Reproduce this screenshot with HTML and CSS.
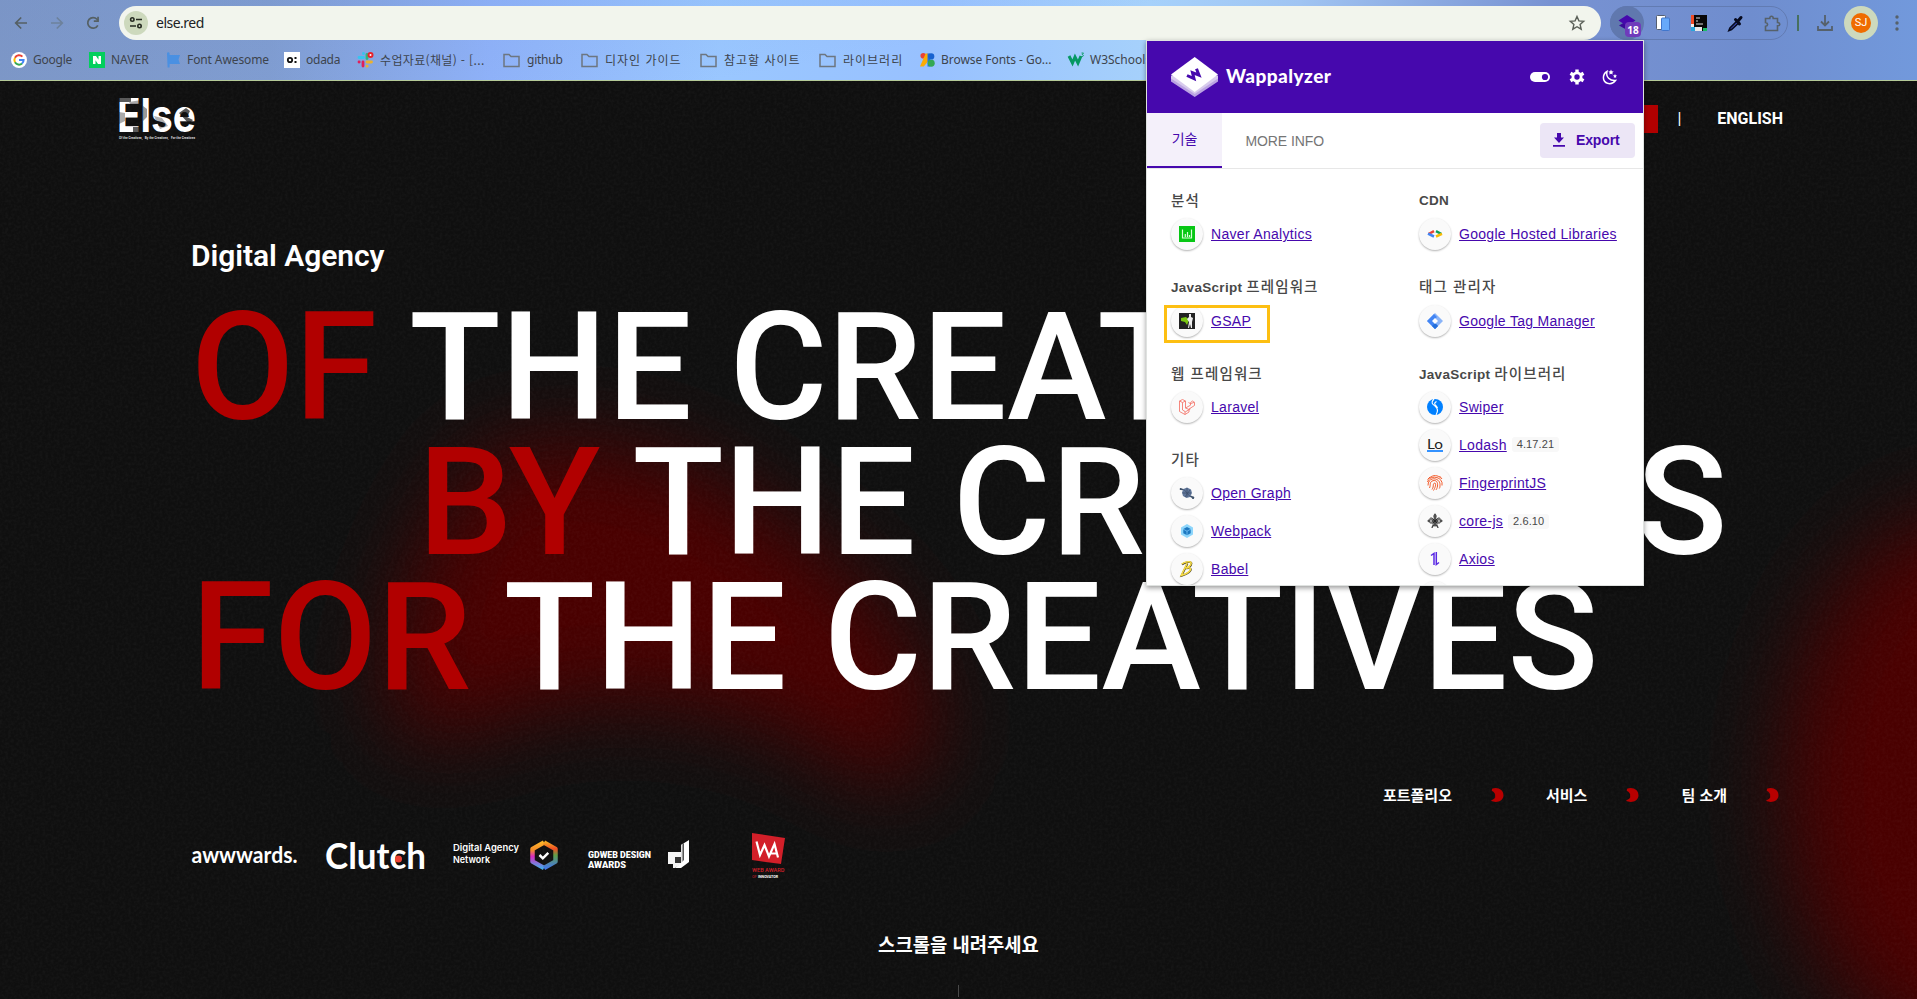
FILE: index.html
```
<!DOCTYPE html>
<html lang="ko">
<head>
<meta charset="utf-8">
<title>else.red</title>
<link rel="stylesheet" href="styles.css">
</head>
<body>
<header class="chrome">
  <div class="toolbar">
    <div class="nav-buttons">
      <svg width="14" height="14" viewBox="0 0 14 14"><path d="M13 7H2M7.200 1.500 1.700 7l5.500 5.500" fill="none" stroke="#556064" stroke-width="1.700"/></svg>
      <svg width="14" height="14" viewBox="0 0 14 14"><path d="M1 7h11M6.800 1.500 12.300 7l-5.500 5.500" fill="none" stroke="#6d829c" stroke-width="1.700"/></svg>
      <svg width="14" height="14" viewBox="0 0 14 14"><path d="M11.800 9.300A5.300 5.300 0 1 1 11 3.300L12.200 4.600" fill="none" stroke="#556064" stroke-width="1.700"/><path d="M12.900.8v5.100H7.800V4.200h3.400V.8z" fill="#556064"/></svg>
    </div>
    <div class="address">
      <span class="site-info"><svg width="14" height="12" viewBox="0 0 14 12" fill="none" stroke="#262b22" stroke-width="1.600"><circle cx="3.300" cy="2.500" r="1.700"/><path d="M7 2.500h6M1 9h6"/><circle cx="10.500" cy="9" r="1.700"/></svg></span>
      <span class="url">else.red</span>
      <svg class="star" width="16" height="16" viewBox="0 0 16 16"><path d="M8 1.500l1.900 4.400 4.800.4-3.600 3.200 1.100 4.700L8 11.700l-4.200 2.500 1.100-4.700L1.300 6.300l4.800-.4z" fill="none" stroke="#5b6058" stroke-width="1.400"/></svg>
    </div>
    <div class="extensions">
      <span class="ext-active">
        <svg width="18" height="17" viewBox="0 0 18 17"><path d="M9 6 17 10.500 9 15 1 10.500z" fill="#3a0a98"/><path d="M9 0 17.500 5.500 9 11 .5 5.500z" fill="#4608ad"/></svg>
        <b class="badge">18</b>
      </span>
      <svg width="16" height="18" viewBox="0 0 16 18"><rect x="1.500" y="1.500" width="9" height="14" rx="1" fill="#fff" stroke="#555e70"/><rect x="6.500" y="4" width="8" height="12.500" rx="1" fill="#67a9fa" stroke="#4176cc"/></svg>
      <svg width="16" height="16" viewBox="0 0 16 16"><path d="M0 0h16v16H0z" fill="#080808"/><path d="M0 0h3v9H0z" fill="#ef4b25"/><path d="M0 9h3v3H0z" fill="#eee"/><path d="M0 12h4v4H0z" fill="#2aa5dc"/><path d="M4 12h7v4H4z" fill="#e8e8e8"/><path d="M12 13h4v3h-4z" fill="#18bd65"/><path d="M5 3h4M5 6h2M5 9h7" stroke="#ddd"/></svg>
      <svg width="17" height="17" viewBox="0 0 17 17"><path d="M10 6 3 13 2 15.500 4.500 14.500 12 7.500z" fill="#4457d5" stroke="#070a1e" stroke-width="1.700"/><path d="M8.500 4.500l4 4.500M11 6l3-3.500" stroke="#070a1e" stroke-width="3" stroke-linecap="round"/></svg>
      <svg width="17" height="17" viewBox="0 0 17 17"><path d="M1.500 3.500h4.300c0-3 3.400-3 3.400 0h4.300v4c3 0 3 3.300 0 3.300V15.500h-12v-4.200c2.800-.5 2.800-3.300 0-3.800z" fill="none" stroke="#56616a" stroke-width="1.600"/></svg>
    </div>
    <i class="divider"></i>
    <svg class="download" width="16" height="16" viewBox="0 0 16 16"><path d="M8 0v10M4 6.500l4 4 4-4M1 11v4h14v-4" fill="none" stroke="#56616a" stroke-width="1.800"/></svg>
    <span class="avatar"><span>SJ</span></span>
    <svg class="kebab" width="4" height="16" viewBox="0 0 4 16" fill="#56616a"><circle cx="2" cy="2" r="1.700"/><circle cx="2" cy="8" r="1.700"/><circle cx="2" cy="14" r="1.700"/></svg>
  </div>
  <nav class="bookmarks">
    <a class="bm"><svg width="16" height="16" viewBox="0 0 16 16"><circle cx="8" cy="8" r="8" fill="#fff"/><g fill="none" stroke-width="2"><path d="M11.400 4.600A4.600 4.600 0 0 0 4 5.700" stroke="#ea4335"/><path d="M4 5.700a4.600 4.600 0 0 0 0 4.600" stroke="#fbbc05"/><path d="M4 10.300a4.600 4.600 0 0 0 7 1.200" stroke="#34a853"/><path d="M11 11.500A4.600 4.600 0 0 0 12.600 8H8" stroke="#4285f4"/></g></svg><span class="narrow">Google</span></a>
    <a class="bm"><svg width="16" height="16" viewBox="0 0 16 16"><path d="M0 0h16v16H0z" fill="#03cf5d"/><path d="M4 4h3l2.500 3.700V4H12v8H9L6.500 8.300V12H4z" fill="#fff"/></svg><span>NAVER</span></a>
    <a class="bm tight"><svg width="16" height="16" viewBox="0 0 16 16"><path d="M0 1.500a1.300 1.300 0 0 1 2.600 0V3H13L11.500 7.500 13 12H2.600v3.500H.6z" fill="#4a90e2"/></svg><span>Font Awesome</span></a>
    <a class="bm"><svg width="16" height="16" viewBox="0 0 16 16"><path d="M0 0h16v16H0z" fill="#fff"/><circle cx="6" cy="8" r="2.200" fill="none" stroke="#111" stroke-width="1.800"/><path d="M10.500 5h2v2h-2zM10.500 9h2v2h-2z" fill="#111"/></svg><span class="narrow">odada</span></a>
    <a class="bm"><svg width="17" height="16" viewBox="0 0 17 16" stroke-width="2.800" stroke-linecap="round"><path d="M6.500 1.500v.2M2 5.500h4.500" stroke="#36c5f0"/><path d="M10 2.500v4" stroke="#2eb67d"/><path d="M10 10h4.500M10 14.200h.2" stroke="#ecb22e"/><path d="M2 10h.2M6 10v4" stroke="#e01e5a"/><circle cx="13.500" cy="3" r="2" fill="#fff" stroke="#e8232d" stroke-width="2"/></svg><span class="ko slack">수업자료(채널) - [...</span></a>
    <a class="bm folder"><svg width="17" height="15" viewBox="0 0 17 15"><path class="folder-line" d="M1 3V1.500h5l2 2h8v10H1z"/></svg><span class="narrow">github</span></a>
    <a class="bm folder"><svg width="17" height="15" viewBox="0 0 17 15"><path class="folder-line" d="M1 3V1.500h5l2 2h8v10H1z"/></svg><span class="ko wide">디자인 가이드</span></a>
    <a class="bm folder"><svg width="17" height="15" viewBox="0 0 17 15"><path class="folder-line" d="M1 3V1.500h5l2 2h8v10H1z"/></svg><span class="ko wide">참고할 사이트</span></a>
    <a class="bm folder"><svg width="17" height="15" viewBox="0 0 17 15"><path class="folder-line" d="M1 3V1.500h5l2 2h8v10H1z"/></svg><span class="ko wide">라이브러리</span></a>
    <a class="bm fonts"><svg width="15" height="16" viewBox="0 0 16 16"><circle cx="3.500" cy="3.500" r="3" fill="#ea4335"/><path d="M6 1h3v8l-5 6H0z" fill="#fbab04"/><path d="M8 1h3v14H8z" fill="#1a73e8"/><circle cx="12" cy="4.200" r="3.300" fill="#1762d0"/><circle cx="12" cy="11.500" r="3.700" fill="#34a853"/></svg><span>Browse Fonts - Go...</span></a>
    <a class="bm w3"><svg width="17" height="16" viewBox="0 0 17 16" fill="none" stroke="#059862"><path d="M1 4l3.500 7L7 5l3 6 3-7" stroke-width="3"/><path d="M13.500 1h2l-1.300 1.600c1.800 0 1.500 2.400-.7 1.900" stroke-width=".9"/></svg><span>W3Schools</span></a>
  </nav>
</header>

<main class="site">
  <svg class="backdrop" width="1917" height="918" viewBox="0 81 1917 918">
    <defs>
      <filter id="soft" x="-50%" y="-50%" width="200%" height="200%"><feGaussianBlur stdDeviation="44"/></filter>
      <filter id="grain" x="0" y="0" width="100%" height="100%"><feTurbulence type="fractalNoise" baseFrequency="0.350" numOctaves="2" seed="4"/><feColorMatrix values="0 0 0 0 1  0 0 0 0 1  0 0 0 0 1  0.060 0 0 0 -0.022"/></filter>
    </defs>
    <g fill="#490000" filter="url(#soft)">
      <path d="M490 450C570 425 690 445 780 520C890 590 950 690 935 745C915 805 880 790 830 755C770 715 660 690 560 705C490 715 440 755 400 730C365 705 410 520 490 450z"/>
      <ellipse cx="1970" cy="785" rx="185" ry="275"/>
    </g>
    <rect y="81" width="1917" height="918" filter="url(#grain)"/>
  </svg>

  <div class="site-header">
    <svg class="else-logo" width="80" height="42" viewBox="0 0 80 42">
      <defs><pattern id="marble" width="80" height="42" patternUnits="userSpaceOnUse"><path d="M0 0h80v42H0z" fill="#fff"/><path d="M0 0h12v4H0zM14 29h7v6h-7z" fill="#5b5b5b"/><path d="M10 4l12-2v5H12zM0 14l6 1v8l-6 3z" fill="#aaa"/><path d="M35 18l8 2 6 8-8 3z" fill="#b0b0b0"/><path d="M60 15l7-5 4 3-3 6 6 3-4 4z" fill="#555"/><path d="M24 8l4 3v8l-4 4z" fill="#999"/></pattern></defs>
      <text x="-2" y="34" class="else-word" textLength="79" lengthAdjust="spacingAndGlyphs" fill="url(#marble)">Else</text>
      <text x="0" y="41" class="else-tag" textLength="76" lengthAdjust="spacingAndGlyphs">Of the Creatives, &#160; By the Creatives, &#160; For the Creatives</text>
    </svg>
    <div class="languages"><span class="lang-active"></span><span class="bar">|</span><span class="lang">ENGLISH</span></div>
  </div>

  <section class="hero">
    <p class="kicker">Digital Agency</p>
    <h1 class="headline">
      <span class="line"><em>OF</em> THE CREATIVES</span>
      <span class="line shifted"><em>BY</em> THE CREATIVES</span>
      <span class="line"><em>FOR</em> THE CREATIVES</span>
    </h1>
  </section>

  <nav class="menu">
    <a>포트폴리오</a><svg width="13" height="14" viewBox="0 0 13 14"><path class="moon" d="M1 0.700C7-1.500 12.500 2 12.500 7.200C12.500 13 5 15.800 0 12.500C3 11.500 5 9.500 4 8C5 6.500 3 3.500 .8 3z"/></svg>
    <a>서비스</a><svg width="13" height="14" viewBox="0 0 13 14"><path class="moon" d="M1 0.700C7-1.500 12.500 2 12.500 7.200C12.500 13 5 15.800 0 12.500C3 11.500 5 9.500 4 8C5 6.500 3 3.500 .8 3z"/></svg>
    <a>팀 소개</a><svg width="13" height="14" viewBox="0 0 13 14"><path class="moon" d="M1 0.700C7-1.500 12.500 2 12.500 7.200C12.500 13 5 15.800 0 12.500C3 11.500 5 9.500 4 8C5 6.500 3 3.500 .8 3z"/></svg>
  </nav>

  <div class="awards">
    <svg width="105" height="50" viewBox="0 0 105 50"><text x="-.5" y="32" class="aw" textLength="106" lengthAdjust="spacingAndGlyphs">awwwards.</text></svg>
    <svg width="99" height="50" viewBox="0 0 99 50"><text x="-1" y="37.500" class="clutch" textLength="101" lengthAdjust="spacingAndGlyphs">Clutch</text><circle cx="72.500" cy="28" r="3.500" fill="#ef4335"/></svg>
    <svg width="106" height="50" viewBox="0 0 106 50">
      <defs><linearGradient id="hexL" x2="0" y2="1"><stop stop-color="#fdb52a"/><stop offset=".3" stop-color="#f58a2b"/><stop offset=".55" stop-color="#d82cc0"/><stop offset="1" stop-color="#48a8ea"/></linearGradient><linearGradient id="hexR" x2="0" y2="1"><stop stop-color="#f5a623"/><stop offset=".25" stop-color="#f04d24"/><stop offset=".5" stop-color="#5fa048"/><stop offset="1" stop-color="#4478e6"/></linearGradient></defs>
      <text x="0" y="20" class="dan" textLength="66" lengthAdjust="spacingAndGlyphs">Digital Agency</text><text x="0" y="32" class="dan" textLength="37" lengthAdjust="spacingAndGlyphs">Network</text>
      <path d="M91 11.500 79.500 18v12.500L91 37" fill="none" stroke="url(#hexL)" stroke-width="4.500" stroke-linejoin="round"/><path d="M91 11.500 102.500 18v12.500L91 37" fill="none" stroke="url(#hexR)" stroke-width="4.500" stroke-linejoin="round"/>
      <path d="M86.500 24l3.300 3.300 5.500-5.500" fill="none" stroke="#fff" stroke-width="2.500"/>
    </svg>
    <svg width="101" height="50" viewBox="0 0 101 50">
      <defs><linearGradient id="fold"><stop stop-color="#fff"/><stop offset="1" stop-color="#333"/></linearGradient></defs>
      <text x="0" y="27" class="gd" textLength="63" lengthAdjust="spacingAndGlyphs">GDWEB DESIGN</text><text x="0" y="37" class="gd" textLength="38" lengthAdjust="spacingAndGlyphs">AWARDS</text>
      <path d="M80 21h13v12l-6 4h-2v-4h-5z" fill="#f4f4f4"/><path d="M87 26h6v6h-6z" fill="#333"/><path d="M101 9v22l-8 6h-6l6-5V14z" fill="#fff"/><path d="M93 14l3-2v17l-3 3z" fill="url(#fold)"/>
    </svg>
    <svg class="wa" width="34" height="50" viewBox="0 0 34 50">
      <path d="M0 2 33 7 29 33 0 29z" fill="#d21f29"/><path d="M4.500 10.500 8 24 12.500 14 17 25.500 22.500 13l3.500 13.500M18 22.500h6.500" fill="none" stroke="#fff" stroke-width="2.200"/>
      <text x="0" y="40.500" class="wa-red" textLength="32.500" lengthAdjust="spacingAndGlyphs">WEB AWARD</text><text x="0" y="46.500" class="wa-tiny" fill="#8d1a20">OF</text><text x="6" y="46.500" class="wa-tiny" fill="#fff" textLength="20" lengthAdjust="spacingAndGlyphs">INNOVATOR</text>
    </svg>
  </div>

  <div class="scroll-hint"><span>스크롤을 내려주세요</span><i></i></div>
</main>

<aside class="popup">
  <div class="popup-head">
    <svg width="48" height="40" viewBox="0 0 48 40"><path d="M0 20v4.500L23.700 40 47 24.500V20z" fill="#bba4e2"/><path d="M0 18.500v3L23.700 37 47 21.500v-3z" fill="#d8cbed"/><path d="M23.700 0 47 17.500 23.700 35 0 17.500z" fill="#fff"/><path d="M16 18.500l7 3.200-1.500-6 6.500 2.500-2.500-6.500" fill="none" stroke="#4608ad" stroke-width="3"/></svg>
    <span class="brand">Wappalyzer</span>
    <svg class="toggle" width="20" height="10" viewBox="0 0 20 10"><rect width="20" height="10" rx="5" fill="#fff"/><circle cx="15" cy="5" r="3.100" fill="#4608ad"/></svg>
    <svg class="gear" width="16" height="16" viewBox="0 0 16 16"><g fill="#fff"><circle cx="8" cy="8" r="5.500"/><path d="M6.300.5h3.400v15H6.300z"/><path d="M6.300.5h3.400v15H6.300z" transform="rotate(60 8 8)"/><path d="M6.300.5h3.400v15H6.300z" transform="rotate(120 8 8)"/></g><circle cx="8" cy="8" r="2.700" fill="#4608ad"/></svg>
    <svg class="night" width="16" height="16" viewBox="0 0 16 16"><path d="M5 2.500C0 5.500.3 12.500 5.500 14.300C9 15.300 12 13.500 13.500 11.500C8 12 3.500 8 5 2.500z" fill="none" stroke="#fff" stroke-width="1.500"/><path d="M9 .5l.8 1.700 1.900.2-1.400 1.300.4 1.900L9 4.700l-1.700.9.4-1.900-1.400-1.300 1.900-.2zM13 5l.6 1.200 1.400.3-1 1 .2 1.400-1.200-.7-1.200.7.2-1.400-1-1 1.400-.3z" fill="#fff"/></svg>
  </div>
  <div class="tabs">
    <span class="tab active">기술</span><span class="tab">MORE INFO</span>
    <span class="export"><svg width="12" height="14" viewBox="0 0 12 14" fill="#4608ad"><path d="M4 0h4v4.500h3L6 10 1 4.500h3zM0 12h12v1.700H0z"/></svg>Export</span>
  </div>
  <div class="results">
    <div class="column">
      <h2><span>분석</span></h2>
      <div class="tech"><i><svg width="16" height="16" viewBox="0 0 16 16"><path d="M0 0h16v16H0z" fill="#07c714"/><path d="M3.500 3.500v8.500h9V3.500M6.300 8v3M8.500 6v5M10.500 9v2" fill="none" stroke="#d8ffd8" stroke-width="1.200"/></svg></i><a>Naver Analytics</a></div>
      <h2>JavaScript <span>프레임워크</span></h2>
      <div class="tech"><i><svg width="16" height="16" viewBox="0 0 16 16"><path d="M0 0h16v16H0z" fill="#222"/><path d="M2 5l5-1 3 3-2 5-2-3-4-1z" fill="#79c711"/><path d="M10 1h2v3l2 1-1 4v6h-1l-1-4-1 4H9l1-6-2-3 2-2z" fill="#eee"/></svg></i><a>GSAP</a></div>
      <h2><span>웹 프레임워크</span></h2>
      <div class="tech"><i><svg width="16" height="16" viewBox="0 0 16 16" fill="none" stroke="#f4796f" stroke-width=".9"><path d="M.5 2 3.500.5l3 1.500v7l5-2.800V3.500L13.500 2l2 1.500v3L10 10v3l-4 2.500L.5 12.500zM.5 2l3 1.500 3-1.500M3.500 3.500V11l3 1.800 5-3M6.500 9l3.500 1.500M9.500 3.500l2 1.200 4-1.500M6 12.500v3"/></svg></i><a>Laravel</a></div>
      <h2><span>기타</span></h2>
      <div class="tech"><i><svg width="16" height="16" viewBox="0 0 16 16"><path d="M1 4l5 1M11 11l4 2" stroke="#41546c" stroke-width="1.400"/><circle cx="1.700" cy="4" r="1" fill="#41546c"/><circle cx="14" cy="12.800" r="1.200" fill="#41546c"/><path d="M8 2.500l4 2 1 3.500-2 4-3.500 1-3.500-2-1-3.500L4.500 4z" fill="#60779b"/><path d="M8 3v9M3.500 8H12M5 4.500l6 7M11 5l-5 7" stroke="#40516c" stroke-width=".8"/></svg></i><a>Open Graph</a></div>
      <div class="tech"><i><svg width="16" height="16" viewBox="0 0 16 16"><path d="M8 1l6 3.500v7L8 15l-6-3.500v-7z" fill="#8ed6fb"/><path d="M8 4l3.700 2v4.200L8 12.300l-3.700-2.100V6z" fill="#1c78c0"/><path d="M4 6l4 2.200L12 6M8 8v4" fill="none" stroke="#83cafa" stroke-width=".7"/></svg></i><a>Webpack</a></div>
      <div class="tech"><i><svg width="16" height="16" viewBox="0 0 16 16"><path d="M3 3.500C7 .8 12.500 0 12.500 2.500S9 7 7 7.500c4-1 6 0 4.200 2.500S5 14 2.500 14.800L8.500 2.500" fill="none" stroke="#453d22" stroke-width="1.800"/><path d="M2.700 3C7 0 12.200 0 12.200 2.300S8.700 6.700 6.700 7.200c4-1 6 0 4.200 2.500S5 13.500 2.200 14.500L8.200 2.200" fill="none" stroke="#f6db43" stroke-width="1.500"/></svg></i><a>Babel</a></div>
    </div>
    <div class="column">
      <h2>CDN</h2>
      <div class="tech"><i><svg width="16" height="16" viewBox="0 0 16 16" fill="none" stroke-width="2.500"><path d="M7 5.200 1.500 8" stroke="#ea4335"/><path d="M1 7.700 7 10.500" stroke="#4285f4"/><path d="M9 5.200 14.500 8" stroke="#0f9d58"/><path d="M15 7.900 9 10.500" stroke="#fbbc05"/></svg></i><a>Google Hosted Libraries</a></div>
      <h2><span>태그 관리자</span></h2>
      <div class="tech"><i><svg width="16" height="16" viewBox="0 0 16 16"><path d="M8 0l8 8-8 8-8-8z" fill="#8ab4f8"/><path d="M7 1 0 8l8 8 3-3-5-5 4-4z" fill="#4285f4"/><path d="M8 10l3 3-3 3-3-3z" fill="#246fdb"/><path d="M8 5l3 3-3 3-3-3z" fill="#fff"/></svg></i><a>Google Tag Manager</a></div>
      <h2>JavaScript <span>라이브러리</span></h2>
      <div class="tech"><i><svg width="16" height="16" viewBox="0 0 16 16"><circle cx="8" cy="8" r="8" fill="#0080ff"/><path d="M7 0C3 4 6 5.500 8 7s4 4 1 9M9.500 2.500C5 5 10 6.500 10.500 9" fill="none" stroke="#fff" stroke-width="1.100"/></svg></i><a>Swiper</a></div>
      <div class="tech"><i><svg width="16" height="16" viewBox="0 0 16 16"><text class="lo" x="0" y="11.500" textLength="16" lengthAdjust="spacingAndGlyphs">Lo</text><path d="M0 13h16v2H0z" fill="#3492ff"/></svg></i><a>Lodash</a><b>4.17.21</b></div>
      <div class="tech"><i><svg width="16" height="16" viewBox="0 0 16 16" fill="none" stroke="#f35b2b" stroke-width="1"><path d="M3 2.500C6-.2 11 0 13.500 3M.5 7C2 .5 13 .5 15 7.500v3M1 10.500C1 1 13 2.500 13 9.500c0 2 0 3-.7 4M2.500 13C4 10 2 7 6 5.700c3.500-1 5 2 4.500 5.300-.2 2-1 3-1.500 4M5 14.500C7.500 11 5 8.500 8 8c1.500 1 0 5-1.500 7.500M.5 4.500 3 2M12.500 1l2.500 3"/></svg></i><a>FingerprintJS</a></div>
      <div class="tech"><i><svg width="16" height="16" viewBox="0 0 16 16"><path d="M8 0l2 3-1 3 3-2 4 4-4 3-2-1 1 3 1 2-3-2-1 1-1-1-3 2 1-2 1-3-2 1-4-3 4-4 3 2-1-3z" fill="#777"/><path d="M8 1v12M1 8h14M5.500 5.500l5 5M10.500 5.500l-5 5M5 15l1.500-3M11 15l-1.500-3" stroke="#222" stroke-width=".9"/><circle cx="4" cy="8" r=".9" fill="#ddd"/><circle cx="12" cy="8" r=".9" fill="#ddd"/></svg></i><a>core-js</a><b>2.6.10</b></div>
      <div class="tech"><i><svg width="16" height="16" viewBox="0 0 16 16" fill="none" stroke="#5a29e4" stroke-width="1.500"><path d="M4 4.500 7 2.500V14M9.300 1v12.500L12 11.500"/></svg></i><a>Axios</a></div>
      <div class="tech"><i></i></div>
    </div>
  </div>
  <div class="highlight"></div>
</aside>
</body>
</html>
```
FILE: styles.css
```
* { box-sizing: border-box; }
body { margin: 0; width: 1917px; height: 999px; overflow: hidden; position: relative; display: flex; flex-direction: column; background: #0f0f0f; font-family: "Noto Sans", "Noto Sans CJK KR", sans-serif; }
svg { display: block; flex: none; overflow: visible; }

/* Browser chrome */
.chrome { height: 81px; flex: none; border-bottom: 1px solid #b5ca98; background: linear-gradient(170deg, rgba(90,120,190,.15), transparent 50%), linear-gradient(90deg, #809ac8 0, #829fd2 270px, #90b3fa 490px, #9ac7ff 720px, #98c1ff 930px, #a6d1fb 1150px, #a0c4f2 1300px, #7892d2 1550px, #6f8dce 1750px, #7299dc 1917px); }
.toolbar { height: 40px; display: flex; align-items: center; padding: 6px 0 0 14px; }
.nav-buttons { display: flex; gap: 22px; width: 105px; }
.address { width: 1482px; height: 34px; border-radius: 17px; background: #f2f5ed; display: flex; align-items: center; padding-left: 5px; }
.site-info { width: 24px; height: 24px; border-radius: 50%; background: #cdd9bd; display: flex; align-items: center; justify-content: center; }
.url { font-size: 14px; line-height: 20px; color: #202124; margin-left: 8px; letter-spacing: -.5px; }
.star { margin-left: auto; margin-right: 16px; }
.extensions { width: 178px; height: 34px; margin-left: 9px; border: 1px solid #627bb2; border-radius: 17px; display: flex; align-items: center; gap: 20px; }
.ext-active { width: 34px; height: 34px; margin: -1px -9px -1px -1px; border-radius: 50%; background: #6078ae; position: relative; padding: 9px 8px; }
.badge { position: absolute; left: 15px; top: 16px; width: 16px; height: 15px; border-radius: 4px; background: #6f3bbb; color: #fff; font-size: 10px; line-height: 16px; text-align: center; }
.divider { width: 2px; height: 16px; background: #47705f; margin-left: 9px; }
.download { margin-left: 18px; }
.avatar { width: 34px; height: 34px; margin-left: 11px; border-radius: 50%; background: #cdd9bd; display: flex; align-items: center; justify-content: center; }
.avatar span { width: 20px; height: 20px; border-radius: 50%; background: #ef6c00; color: #fff; font: 11px/20px Roboto, sans-serif; text-align: center; }
.kebab { margin-left: 17px; }
.bookmarks { height: 40px; padding-left: 11px; display: grid; grid-template-columns: 78px 78px 117px 73px 146px 78px 119px 119px 101px 148px 120px; align-items: center; }
.bm { display: flex; align-items: center; gap: 6px; font-size: 12px; line-height: 18px; color: #3d444d; white-space: nowrap; }
.bm.tight { gap: 4px; letter-spacing: -.1px; }
.bm.folder { gap: 7px; }
.bm.fonts { gap: 6px; letter-spacing: -.05px; }
.bm.w3 { gap: 5px; }
.narrow { letter-spacing: -.25px; }
.ko { font-family: "Noto Sans CJK KR", sans-serif; }
.ko.slack { letter-spacing: .35px; }
.ko.wide { letter-spacing: 1px; }
.folder-line { fill: none; stroke: #6d7680; stroke-width: 1.5px; }

/* Agency site */
.site { position: relative; height: 918px; display: flex; flex-direction: column; color: #fff; }
.backdrop { position: absolute; left: 0; top: 0; }
.site-header { position: relative; height: 152px; display: flex; justify-content: space-between; padding: 17px 134px 0 119px; }
.else-word { font: 700 46px Inter, sans-serif; }
.else-tag { font: 700 3.500px Roboto, sans-serif; fill: #ddd; }
.languages { display: flex; height: 28px; margin-top: 7px; align-items: center; font: 700 16px/28px Roboto, sans-serif; }
.lang-active { width: 58px; height: 28px; background: #b10000; }
.bar { margin-left: 19px; font-weight: 400; }
.lang { margin-left: 36px; }
.hero { position: relative; padding-left: 191px; }
.kicker { margin: 0; height: 68px; font: 600 30px/46px Roboto, sans-serif; letter-spacing: -.05px; }
.headline { margin: 0; font: 500 150px/135px Roboto, sans-serif; letter-spacing: .1px; white-space: nowrap; }
.line { display: block; }
.line.shifted { padding-left: 227px; }
.line em { font-style: normal; color: #b10000; margin-right: -1.800px; }
.menu { position: relative; height: 24px; margin-top: 77px; padding-right: 138px; display: flex; justify-content: flex-end; align-items: center; font: 700 15px/24px "Noto Sans CJK KR", sans-serif; }
.menu a { white-space: nowrap; }
.menu svg { margin: 0 42px 0 39px; }
.menu svg:last-child { margin-right: 0; }
.moon { fill: #b70000; }
.awards { position: relative; display: flex; height: 50px; margin: 24px 0 0 192px; gap: 28.500px; }
.awards .wa { margin-left: 35px; }
.aw, .clutch, .dan, .gd { fill: #fff; }
.aw { font: 700 23px Lato, sans-serif; }
.clutch { font: 700 36px Lato, sans-serif; }
.dan { font: 600 9.500px Inter, sans-serif; }
.gd { font: 900 9.500px Roboto, sans-serif; }
.wa-red { font: 500 6px Roboto, sans-serif; fill: #d21f29; }
.wa-tiny { font: 700 3.800px Roboto, sans-serif; }
.scroll-hint { position: relative; margin-top: 49px; display: flex; flex-direction: column; align-items: center; font: 700 18.800px/28px "Noto Sans CJK KR", sans-serif; }
.scroll-hint i { width: 1px; height: 12px; margin-top: 27px; background: #484848; }

/* Extension popup */
.popup { position: absolute; left: 1146px; top: 40px; width: 498px; height: 546px; border: 1px solid #dfe2e0; background: #fff; box-shadow: 0 2px 5px rgba(0,0,0,.4); overflow: hidden; font-family: "Liberation Sans", "Noto Sans CJK KR", sans-serif; }
.popup-head { height: 72px; background: #4608ad; display: flex; align-items: center; padding-left: 24px; }
.brand { width: 106px; margin: -3px 0 0 7px; color: #fff; font: 900 19px/24px Lato, sans-serif; letter-spacing: .45px; }
.toggle { margin-left: 198px; }
.gear { margin-left: 19px; }
.night { margin-left: 17px; }
.tabs { height: 56px; display: flex; border-bottom: 1px solid #e7e7e7; position: relative; }
.tab { height: 55px; padding: 0 23.500px; font-size: 14px; line-height: 57px; color: #757575; letter-spacing: -.1px; }
.tab.active { width: 75px; padding: 0; text-align: center; color: #4608ad; background: #f4f0fa; border-bottom: 2px solid #4608ad; line-height: 53px; }
.export { margin: 10px 8px 0 auto; width: 95px; height: 35px; border-radius: 4px; background: #ece6f6; color: #4608ad; font-size: 14px; font-weight: 700; letter-spacing: -.15px; display: flex; align-items: center; padding: 0 0 1px 13px; gap: 11px; }
.results { display: grid; grid-template-columns: 248px 248px; padding: 18px 0 0 24px; }
.column h2 { margin: 20px 0 0; height: 28.200px; font-size: 13.500px; line-height: 27px; font-weight: 700; letter-spacing: .3px; color: #484848; }
.column h2 span { font: 500 14.500px/26px "Noto Sans CJK KR", sans-serif; letter-spacing: 1.100px; }
.column h2:first-child { margin-top: 0; }
.tech { height: 38.100px; display: flex; align-items: center; font-size: 14px; white-space: nowrap; }
.tech i { width: 32px; height: 32px; margin-right: 8px; border-radius: 50%; background: #fafafa; box-shadow: 0 1px 2px rgba(0,0,0,.3); display: flex; align-items: center; justify-content: center; }
.tech a { color: #4608ad; text-decoration: underline; letter-spacing: .3px; }
.tech b { margin-left: 5px; padding: 0 5px; height: 15px; border-radius: 3px; background: #f8f8f8; color: #484848; font-size: 11px; font-weight: 400; line-height: 15px; letter-spacing: .1px; }
.lo { font: 14px Lato, sans-serif; fill: #222; }
.highlight { position: absolute; left: 17px; top: 264px; width: 106px; height: 38px; border: 3px solid #fdbf12; }
```
